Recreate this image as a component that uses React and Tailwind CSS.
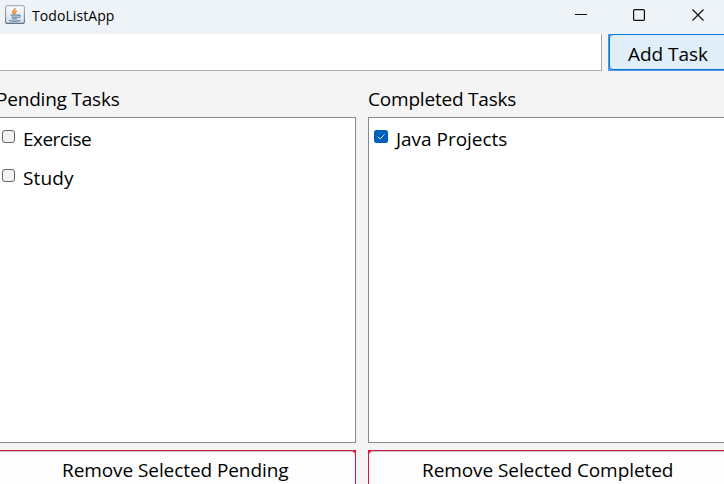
import React from "react";

function JavaIcon() {
  return (
    <svg width="20" height="20" viewBox="0 0 20 20" className="shrink-0">
      <defs>
        <linearGradient id="tile" x1="0" y1="0" x2="0" y2="1">
          <stop offset="0" stopColor="#fcfdfe" />
          <stop offset="1" stopColor="#d5dfe9" />
        </linearGradient>
        <linearGradient id="edge" x1="0" y1="0" x2="0" y2="1">
          <stop offset="0" stopColor="#a9b2bb" />
          <stop offset="1" stopColor="#5f7384" />
        </linearGradient>
      </defs>
      <rect x="0.6" y="0.6" width="18.8" height="17.8" rx="2" fill="url(#tile)" stroke="url(#edge)" strokeWidth="1.1" />
      <path d="M9.4 9.5C7.2 7.6 7.4 6.6 9.1 5.3C10 4.5 10.1 3.8 9.8 3M10.2 9.3C9.2 8 9.6 7.2 11.8 6" fill="none" stroke="#ee8c40" strokeWidth="1.7" />
      <path d="M5.5 10.2h7.9M6.4 12.2h6.4M7 13.8h5M13.2 10.3c2.8-.6 2.8 1.8-.2 2.4" fill="none" stroke="#668aa8" strokeWidth="1.2" />
      <path d="M4 15.3c2.6 1.2 8.6 1.2 11.4 0" fill="none" stroke="#668aa8" strokeWidth="1.4" />
    </svg>
  );
}

function TitleBar() {
  return (
    <header className="flex h-[34px] shrink-0 justify-between bg-[#eef3f8]">
      <div className="flex pl-[5px] pt-[5px]">
        <JavaIcon />
        <span className="ml-[7px] text-[14px] leading-[22px] tracking-[0.08px]">TodoListApp</span>
      </div>
      <svg width="164" height="34" viewBox="0 0 164 34" fill="none" stroke="#111" strokeWidth="1.2">
        <path d="M15 14.5h12" strokeWidth="1" />
        <rect x="73.6" y="9.6" width="10.8" height="10.8" rx="1" />
        <path d="M132.5 9.5l11 11M143.5 9.5l-11 11" />
      </svg>
    </header>
  );
}

function Task({ name, done, className }) {
  return (
    <li className="flex h-[39px]">
      {done ? (
        <svg width="14" height="13" viewBox="0 0 14 13" className="mt-[12px] shrink-0">
          <rect width="14" height="13" rx="2.5" fill="#005fb8" />
          <path d="M4 6.8l2.1 2.1 4.3-4.3" fill="none" stroke="#d5e6f5" strokeWidth="1" />
        </svg>
      ) : (
        <span className="mt-[12px] h-[13px] w-[13px] shrink-0 rounded-[3px] border border-[#666] bg-[#f3f3f3]" />
      )}
      <span className={`ml-[8px] leading-[42px] ${className}`}>{name}</span>
    </li>
  );
}

export default function App() {
  return (
    <div className="flex h-[484px] w-[724px] flex-col overflow-hidden whitespace-nowrap bg-[#f4f4f4] font-['Open_Sans','Noto_Sans',sans-serif] text-[19px] text-black">
      <TitleBar />
      <div className="flex h-[37px] shrink-0 gap-[6px]">
        <div className="w-[602px] shrink-0 border-b border-r border-[#abadb3] bg-white" />
        <div className="w-[130px] shrink-0 bg-[#5694e3] pb-px pl-px">
          <div className="h-full rounded-l-[4px] border border-[#0078d4] bg-[#e0eef9] pl-[18px] leading-[38px] tracking-[-0.05px]">Add Task</div>
        </div>
      </div>
      <main className="flex shrink-0 gap-3">
        <section className="w-[356px] shrink-0">
          <h2 className="-ml-[4px] h-[46px] leading-[56px] tracking-[-0.2px]">Pending Tasks</h2>
          <ul className="h-[326px] border-y border-r border-[#828790] bg-white pl-[2px]">
            <Task name="Exercise" className="tracking-[-0.55px]" />
            <Task name="Study" className="tracking-[0.15px]" />
          </ul>
          <div className="mt-[7px] h-[34px] bg-[#dc143c] pr-px pt-px">
            <div className="h-[40px] rounded-tr-[4px] border-t border-[#c8c8c8] bg-[#fdfdfd] pl-[62px] leading-[37px] tracking-[-0.08px]">Remove Selected Pending</div>
          </div>
        </section>
        <section className="w-[366px] shrink-0">
          <h2 className="h-[46px] leading-[56px] tracking-[-0.2px]">Completed Tasks</h2>
          <ul className="h-[326px] border border-[#828790] bg-white pl-[5px]">
            <Task name="Java Projects" done className="tracking-[-0.03px]" />
          </ul>
          <div className="mt-[7px] h-[34px] bg-[#dc143c] pl-px pt-px">
            <div className="h-[40px] rounded-tl-[4px] border-t border-[#c8c8c8] bg-[#fdfdfd] pl-[53px] leading-[37px] tracking-[-0.08px]">Remove Selected Completed</div>
          </div>
        </section>
      </main>
    </div>
  );
}
